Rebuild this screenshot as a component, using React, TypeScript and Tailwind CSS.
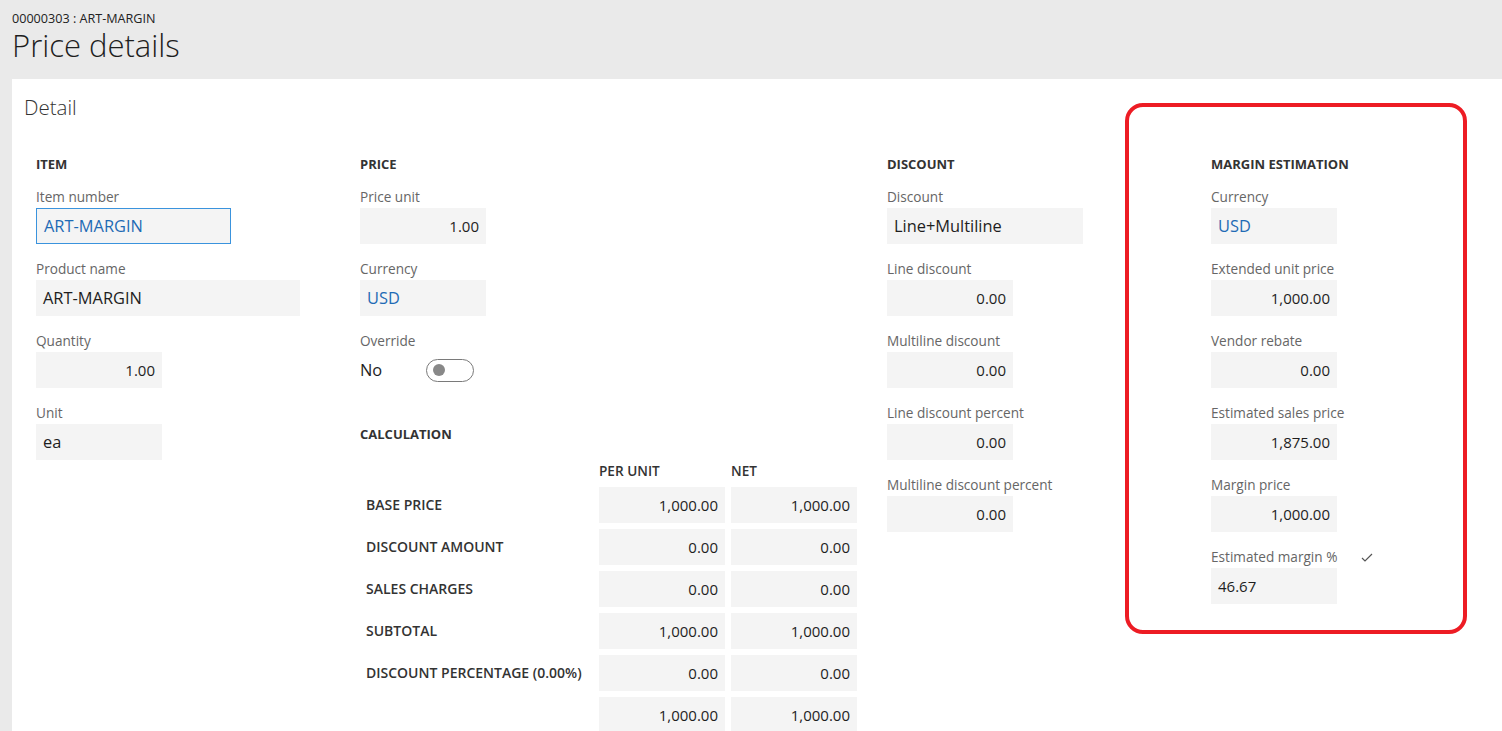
import React from "react";

const font = { fontFamily: '"Segoe UI", "Open Sans", "Noto Sans", sans-serif' };

function Field({
  label,
  value,
  width = "w-[126px]",
  align = "left",
  link = false,
  focused = false,
}: {
  label: string;
  value: string;
  width?: string;
  align?: "left" | "right";
  link?: boolean;
  focused?: boolean;
}) {
  const numeric = align === "right";
  return (
    <div className="mb-4">
      <div className="h-[18px] text-[13.6px] leading-[18px] text-[#666666] whitespace-nowrap">{label}</div>
      <div
        className={`mt-[2px] h-9 ${width} bg-[#f4f4f4] px-[7px] flex items-center ${
          numeric ? "justify-end text-[15px]" : "justify-start text-[16.4px]"
        } ${link ? "text-[#1f6bb5]" : "text-[#1e1e1e]"} ${
          focused ? "border border-[#3a93dd] px-[6px]" : ""
        }`}
      >
        {value}
      </div>
    </div>
  );
}

function Heading({ children }: { children: React.ReactNode }) {
  return (
    <div className="h-4 mb-4 text-[13px] leading-4 font-bold text-[#333333] uppercase whitespace-nowrap">
      {children}
    </div>
  );
}

const calcRows = [
  { label: "BASE PRICE", unit: "1,000.00", net: "1,000.00" },
  { label: "DISCOUNT AMOUNT", unit: "0.00", net: "0.00" },
  { label: "SALES CHARGES", unit: "0.00", net: "0.00" },
  { label: "SUBTOTAL", unit: "1,000.00", net: "1,000.00" },
  { label: "DISCOUNT PERCENTAGE (0.00%)", unit: "0.00", net: "0.00" },
  { label: "", unit: "1,000.00", net: "1,000.00" },
];

function Cell({ value }: { value: string }) {
  return (
    <div className="h-9 w-[126px] bg-[#f4f4f4] px-[7px] flex items-center justify-end text-[15px] text-[#1e1e1e]">
      {value}
    </div>
  );
}

export default function App() {
  return (
    <div className="min-h-screen h-[731px] overflow-hidden bg-[#eaeaea] flex flex-col" style={font}>
      {/* Header */}
      <div className="h-[79px] px-3 pt-[11px] shrink-0">
        <div className="text-[12.6px] leading-4 text-[#222222]">00000303 : ART-MARGIN</div>
        <div className="-mt-px text-[31px] leading-[38px] font-light text-[#1e1e1e]">Price details</div>
      </div>

      {/* Panel */}
      <div className="flex-1 ml-3 bg-white px-3 pt-[14px]">
        <div className="h-7 text-[20.5px] leading-7 font-light text-[#333333]">Detail</div>

        <div className="-mt-px flex items-start pl-3">
          {/* Item */}
          <div className="w-[324px] pt-[36px]">
            <Heading>Item</Heading>
            <Field label="Item number" value="ART-MARGIN" width="w-[195px]" link focused />
            <Field label="Product name" value="ART-MARGIN" width="w-[264px]" />
            <Field label="Quantity" value="1.00" align="right" />
            <Field label="Unit" value="ea" />
          </div>

          {/* Price */}
          <div className="w-[527px] pt-[36px]">
            <Heading>Price</Heading>
            <Field label="Price unit" value="1.00" align="right" />
            <Field label="Currency" value="USD" link />
            <div>
              <div className="h-[18px] text-[13.6px] leading-[18px] text-[#666666]">Override</div>
              <div className="mt-[2px] h-9 flex items-center">
                <span className="w-[66px] text-[16.4px] text-[#1e1e1e]">No</span>
                <div className="w-12 h-[23px] rounded-full border border-[#7a7a7a] flex items-center pl-[6px]">
                  <div className="w-[12px] h-[12px] rounded-full bg-[#888888]" />
                </div>
              </div>
            </div>

            <div className="mt-[38px]">
              <div className="h-4 text-[13px] leading-4 font-bold text-[#333333]">CALCULATION</div>
              <div className="mt-[21px] flex h-4 text-[13.6px] leading-4 font-semibold text-[#333333]">
                <div className="w-[239px]" />
                <div className="w-[132px]">PER UNIT</div>
                <div>NET</div>
              </div>
              <div className="mt-2 flex flex-col gap-[6px]">
                {calcRows.map((r, i) => (
                  <div key={i} className="flex items-center">
                    <div className="w-[239px] pl-[6px] text-[14px] leading-5 font-semibold text-[#333333] whitespace-nowrap">
                      {r.label}
                    </div>
                    <div className="flex gap-[6px]">
                      <Cell value={r.unit} />
                      <Cell value={r.net} />
                    </div>
                  </div>
                ))}
              </div>
            </div>
          </div>

          {/* Discount */}
          <div className="w-[238px] pt-[36px]">
            <Heading>Discount</Heading>
            <Field label="Discount" value="Line+Multiline" width="w-[196px]" />
            <Field label="Line discount" value="0.00" align="right" />
            <Field label="Multiline discount" value="0.00" align="right" />
            <Field label="Line discount percent" value="0.00" align="right" />
            <Field label="Multiline discount percent" value="0.00" align="right" />
          </div>

          {/* Margin estimation (highlighted) */}
          <div className="-mt-[17px] w-[342px] border-4 border-[#ed1c24] rounded-[18px] pl-[82px] pt-[49px] pb-[10px]">
            <Heading>Margin estimation</Heading>
            <Field label="Currency" value="USD" link />
            <Field label="Extended unit price" value="1,000.00" align="right" />
            <Field label="Vendor rebate" value="0.00" align="right" />
            <Field label="Estimated sales price" value="1,875.00" align="right" />
            <Field label="Margin price" value="1,000.00" align="right" />
            <div className="mb-4">
              <div className="w-[162px] flex items-center justify-between h-[18px]">
                <span className="text-[13.6px] leading-[18px] text-[#666666] whitespace-nowrap">Estimated margin %</span>
                <svg width="12" height="10" viewBox="0 0 12 10" fill="none">
                  <path d="M1 6 L4 9 L11 2" stroke="#555555" strokeWidth="1.2" />
                </svg>
              </div>
              <div className="mt-[2px] h-9 w-[126px] bg-[#f4f4f4] px-[7px] flex items-center text-[15px] text-[#1e1e1e]">
                46.67
              </div>
            </div>
          </div>
        </div>
      </div>
    </div>
  );
}
